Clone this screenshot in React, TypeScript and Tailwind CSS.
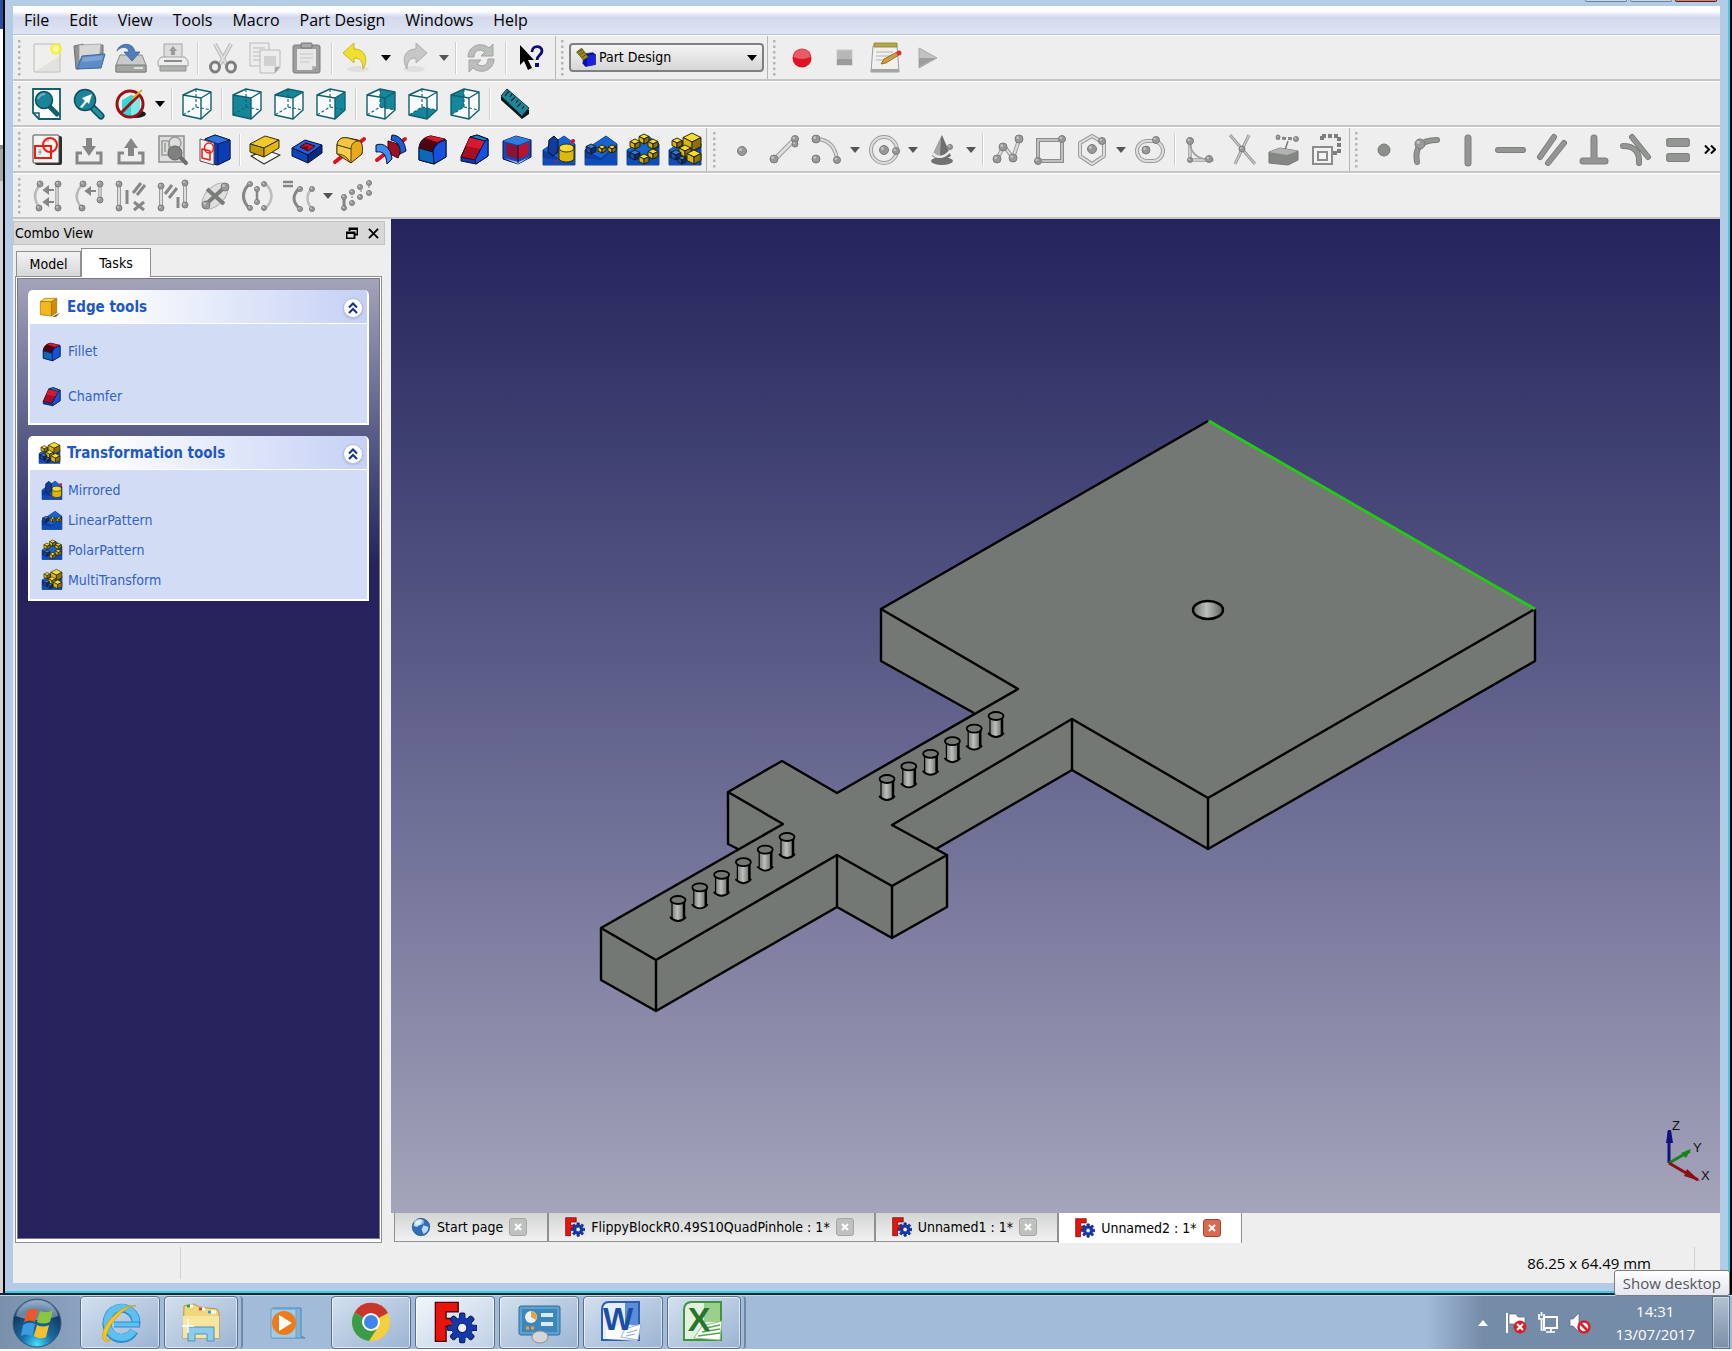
import { useState, type ReactNode } from 'react';
import clsx from 'clsx';

/* ---------- small drawing helpers ---------- */

const INK = '#858785';

function Dot({ x, y, r = 3 }: { x: number; y: number; r?: number }) {
  return (
    <g>
      <circle cx={x} cy={y} r={r} fill="#979997" stroke="#7b7d7b" strokeWidth="1" />
      <circle cx={x - r / 3} cy={y - r / 3} r={r / 3} fill="#c4c6c4" />
    </g>
  );
}

// double outlined line used by most of the sketcher icons
function Rail({ d, w = 4 }: { d: string; w?: number }) {
  return (
    <g fill="none" strokeLinecap="round" strokeLinejoin="round">
      <path d={d} stroke="#9b9d9b" strokeWidth={w} />
      <path d={d} stroke="#dcdddc" strokeWidth={w - 2} />
    </g>
  );
}

function Thick({ d, w = 5 }: { d: string; w?: number }) {
  return (
    <g fill="none" strokeLinecap="round" strokeLinejoin="round">
      <path d={d} stroke="#7c7f7c" strokeWidth={w} />
      <path d={d} stroke="#939693" strokeWidth={w - 2} />
    </g>
  );
}

function ViewCube({ face }: { face?: string }) {
  return (
    <g strokeLinejoin="round">
      <path d="M2 7 15 1 30 4 30 22 20 31 2 27Z" fill="#f7fbfb" />
      {face && <path d={face} fill="#16869a" />}
      <path d="M2 7 15 1 30 4 20 10ZM2 7V27L20 31V10M20 31 30 22V4" fill="none" stroke="#12606e" strokeWidth="1.4" />
      <path d="M15 1V19L2 27M15 19 30 22" fill="none" stroke="#12606e" strokeWidth="1.1" strokeDasharray="3 2" />
    </g>
  );
}

function Nub({ x, y, s = 4, c = 'gold' }: { x: number; y: number; s?: number; c?: 'gold' | 'blue' }) {
  const gold = c === 'gold';
  return (
    <g stroke="#1b1703" strokeWidth=".9" strokeLinejoin="round">
      <path d={`M${x - s} ${y - s / 2}L${x} ${y - s}L${x + s} ${y - s / 2}L${x} ${y}Z`} fill={gold ? '#f7dc2a' : '#2f7be6'} />
      <path d={`M${x - s} ${y - s / 2}L${x} ${y}V${y + s}L${x - s} ${y + s / 2}Z`} fill={gold ? '#d9b60c' : '#104fbd'} />
      <path d={`M${x + s} ${y - s / 2}L${x} ${y}V${y + s}L${x + s} ${y + s / 2}Z`} fill={gold ? '#8a7203' : '#082a80'} />
    </g>
  );
}

function BlueBase() {
  return (
    <g>
      <path d="M0 31V16L21 2 32 10V31Z" fill="#0a3d9e" stroke="#051c55" strokeWidth=".8" />
      <path d="M0 16 21 2 32 10 16 24Z" fill="#1763cf" />
      <path d="M0 24 16 26 32 14V31H0Z" fill="#0d4cba" />
    </g>
  );
}

/* ---------- toolbar icons, all on a 32 x 32 grid ---------- */

const icons: Record<string, ReactNode> = {
  new: (
    <g>
      <rect x="3" y="2" width="26" height="28" rx="1" fill="#efefee" stroke="#b9bab9" />
      <path d="M5 29h23V14Z" fill="#e2e2e1" />
      <circle cx="25" cy="7" r="6" fill="#f4f032" opacity=".8" />
      <circle cx="25" cy="7" r="3" fill="#fbfa9a" />
    </g>
  ),
  open: (
    <g>
      <path d="M1 4 10 2 12 4 30 3V16L5 27H3Z" fill="#8f918f" stroke="#6f716f" />
      <path d="M6 3 28 2 26 18H6Z" fill="#d6d7d6" stroke="#9fa19f" strokeWidth=".8" />
      <path d="M9 14 32 12 28 26 4 27Z" fill="#5f8cc6" stroke="#3d689f" />
      <path d="M10 15.500 30 13.500 29 18 9 20Z" fill="#7ba5d8" />
    </g>
  ),
  save: (
    <g>
      <path d="M5 13H27L31 23V30H1V23Z" fill="#c9cac9" stroke="#8a8c8a" />
      <path d="M1 23H31V30H1Z" fill="#a4a6a4" stroke="#7d7f7d" />
      <path d="M19 26h9" stroke="#ddd" strokeWidth="2" />
      <path d="M2 9C4 1 18-1 20 10H25L17 19 9 10H14C13 4 6 4 2 9Z" fill="#4e7db8" stroke="#37639a" strokeWidth=".8" />
    </g>
  ),
  print: (
    <g>
      <rect x="7" y="2" width="18" height="14" fill="#dcdddc" stroke="#a2a4a2" />
      <path d="M16 4 20 9H18V13H14V9H12Z" fill="#9a9c9a" />
      <path d="M4 15H28L31 19V24H1V19Z" fill="#ececec" stroke="#a2a4a2" />
      <path d="M7 19H25" stroke="#8a8c8a" strokeWidth="2" />
      <path d="M3 24H29V29H3Z" fill="#b2b4b2" stroke="#8f918f" />
    </g>
  ),
  cut: (
    <g fill="none">
      <path d="M8 2 19 22M24 2 13 22" stroke="#b7b9b7" strokeWidth="4" />
      <path d="M8 2 19 22M24 2 13 22" stroke="#dedfde" strokeWidth="2" />
      <ellipse cx="8" cy="25" rx="4.500" ry="5" stroke="#7d7f7d" strokeWidth="3" />
      <ellipse cx="24" cy="25" rx="4.500" ry="5" stroke="#7d7f7d" strokeWidth="3" />
    </g>
  ),
  copy: (
    <g fill="#ececec" stroke="#b8bab8">
      <rect x="1" y="1" width="19" height="23" />
      <path d="M4 6h12M4 10h12M4 14h8M4 18h8" fill="none" />
      <path d="M11 8H31V25L26 31H11Z" />
      <path d="M15 14H27V24H15Z" fill="#cfd0cf" stroke="none" />
      <path d="M31 25H26V31Z" fill="#9fa19f" />
    </g>
  ),
  paste: (
    <g>
      <rect x="2" y="3" width="27" height="28" rx="2" fill="#9c9e9c" stroke="#7b7d7b" />
      <path d="M6 7H25V24L21 28H6Z" fill="#e6e7e6" />
      <path d="M9 12h13M9 16h13M9 20h9" stroke="#c4c5c4" />
      <path d="M25 24H21V28Z" fill="#b4b6b4" />
      <rect x="10" y="1" width="11" height="5" rx="1" fill="#a9aba9" stroke="#707270" />
    </g>
  ),
  undo: (
    <g>
      <ellipse cx="17" cy="27" rx="11" ry="3" fill="#dfdfdd" />
      <path d="M2 11 13 1V7C24 7 28 17 22 27 22 19 19 16 13 16V21Z" fill="#f0df2e" stroke="#c9b71a" />
    </g>
  ),
  redo: (
    <g>
      <ellipse cx="15" cy="27" rx="11" ry="3" fill="#dfdfdd" />
      <path d="M28 11 17 1V7C6 7 2 17 8 27 8 19 11 16 17 16V21Z" fill="#c6c7c6" stroke="#aaacaa" />
    </g>
  ),
  refresh: (
    <g fill="#bcbebc" stroke="#a1a3a1">
      <path d="M3 15C3 4 16-1 24 6L28 2V14H16L20 10C14 6 9 9 9 15Z" />
      <path d="M29 17C29 28 16 33 8 26L4 30V18H16L12 22C18 26 23 23 23 17Z" />
    </g>
  ),
  whatsThis: (
    <g>
      <path d="M5 3V23L9 19 13 28 17 26 13 18H19Z" fill="#000" />
      <path d="M17 10C17 3 27 3 27 9 27 13 22 13 22 18" fill="none" stroke="#0a0a7c" strokeWidth="2.800" />
      <rect x="20" y="21" width="4" height="4" fill="#0a0a7c" />
    </g>
  ),
  record: (
    <g>
      <circle cx="16" cy="16" r="9.500" fill="#de1426" />
      <path d="M7.500 15A8.500 8 0 0 1 24.500 15Q16 19 7.500 15Z" fill="#ea5a66" />
    </g>
  ),
  stop: (
    <g>
      <rect x="9" y="8" width="15" height="15" fill="#b6b7b6" stroke="#c9cac9" />
      <rect x="9" y="17" width="15" height="6" fill="#9a9c9a" />
    </g>
  ),
  editMacro: (
    <g>
      <path d="M3 4H27L29 30H1Z" fill="#f0f0ee" stroke="#9c9e9c" />
      <path d="M1 27H29V30H1Z" fill="#a4a6a4" />
      <path d="M4 1H27V5H4Z" fill="#b4a84a" stroke="#8c8230" strokeWidth=".8" />
      <path d="M6 10h17M6 14h17M6 18h8" stroke="#b2b4b2" />
      <path d="M11 22 14 17 27 10 29 13 16 21Z" fill="#d69a3c" stroke="#8a5d18" strokeWidth=".8" />
      <circle cx="29" cy="11" r="2.500" fill="#d2323a" />
    </g>
  ),
  play: (
    <g>
      <path d="M7 6 25 16 7 26Z" fill="#c2c3c2" stroke="#a8aaa8" />
      <path d="M7 16H24L7 25Z" fill="#9c9e9c" />
    </g>
  ),

  fitAll: (
    <g>
      <path d="M2 1H29V31H8L2 25Z" fill="#fbfdfd" stroke="#12606e" strokeWidth="1.800" />
      <path d="M2 25H8V31" fill="none" stroke="#12606e" strokeWidth="1.500" />
      <path d="M19 19 26 26" stroke="#12606e" strokeWidth="5" strokeLinecap="round" />
      <circle cx="13" cy="12" r="8.500" fill="#1b8397" stroke="#0d4f5c" strokeWidth="1.500" />
      <path d="M7 11Q9 6 14 6" stroke="#6db6c3" strokeWidth="2" fill="none" />
    </g>
  ),
  fitSelection: (
    <g>
      <path d="M20 20 28 28" stroke="#0d4f5c" strokeWidth="7" strokeLinecap="round" />
      <path d="M21 21 28 28" stroke="#2290a5" strokeWidth="4" strokeLinecap="round" />
      <circle cx="12" cy="12" r="10.500" fill="#1b8397" stroke="#0d4f5c" strokeWidth="1.500" />
      <path d="M7 19 12 13 9 10 19 6 16 16 14 14 9 20Z" fill="#fff" />
    </g>
  ),
  drawStyle: (
    <g>
      <ellipse cx="20" cy="26" rx="11" ry="4" fill="#1b1b1b" />
      <path d="M7 12 16 7 25 10V25L16 29 7 26Z" fill="#35d6d6" />
      <path d="M16 13V29L25 25V10Z" fill="#7deaea" />
      <circle cx="15" cy="16" r="13" fill="none" stroke="#9c1016" strokeWidth="3" />
      <path d="M6 25 24 7" stroke="#9c1016" strokeWidth="3" />
      <path d="M17 11 27 2" stroke="#d6b12a" strokeWidth="2" />
    </g>
  ),
  axo: <ViewCube />,
  front: <ViewCube face="M2 7 20 10V31L2 27Z" />,
  top: <ViewCube face="M2 7 15 1 30 4 20 10Z" />,
  right: <ViewCube face="M30 4 20 10V31L30 22Z" />,
  rear: <ViewCube face="M15 1 30 4V22L15 19Z" />,
  bottom: <ViewCube face="M2 27 15 19 30 22 20 31Z" />,
  left: <ViewCube face="M2 7 15 1V19L2 27Z" />,
  measure: (
    <g>
      <path d="M2 8 8 1 30 22V26L23 31 2 12Z" fill="#111" />
      <path d="M2 8 8 1 30 20 23 28Z" fill="#1f8699" stroke="#0b3a44" />
      <path d="M10 3 6 8M13 6 11 9M16 9 12 13M19 12 17 15M22 15 18 19M25 18 23 21" stroke="#0b2a32" strokeWidth="1.300" />
    </g>
  ),

  sketch: (
    <g>
      <rect x="4" y="2" width="27" height="29" rx="2" fill="#2e2e2c" />
      <rect x="2" y="1" width="26" height="28" rx="1" fill="#f4f4f2" stroke="#4c4c4a" />
      <circle cx="19" cy="11" r="7" fill="none" stroke="#f21b10" strokeWidth="2" />
      <rect x="4" y="12" width="16" height="12" fill="none" stroke="#f21b10" strokeWidth="2" />
      <path d="M9 15v6M7 18h4M15 7h3" stroke="#8b8b89" />
    </g>
  ),
  importSketch: (
    <g>
      <path d="M9 19H4V29H28V19H23" fill="none" stroke={INK} strokeWidth="3" />
      <path d="M13 4H19V12H23L16 22 9 12H13Z" fill={INK} />
    </g>
  ),
  exportSketch: (
    <g>
      <path d="M9 19H4V29H28V19H23" fill="none" stroke={INK} strokeWidth="3" />
      <path d="M13 22H19V14H23L16 4 9 14H13Z" fill={INK} />
    </g>
  ),
  viewSketch: (
    <g>
      <rect x="2" y="2" width="25" height="26" fill="#dcdddc" stroke="#8d8f8d" strokeWidth="1.500" />
      <circle cx="18" cy="9" r="6" fill="none" stroke="#9b9d9b" strokeWidth="1.500" />
      <path d="M5 7h7v14H5ZM8 9v9" fill="none" stroke="#9b9d9b" strokeWidth="1.500" />
      <path d="M22 22 29 29" stroke="#6e706e" strokeWidth="4" strokeLinecap="round" />
      <circle cx="18" cy="19" r="7" fill="#7f817f" stroke="#636563" />
    </g>
  ),
  mapSketch: (
    <g strokeLinejoin="round">
      <path d="M6 5 16 1 31 6V25L18 31 6 27Z" fill="#0b3ab0" stroke="#03123c" />
      <path d="M6 5 16 1 31 6 19 10Z" fill="#2c74e0" stroke="#03123c" strokeWidth=".7" />
      <path d="M19 10 31 6V25L19 31Z" fill="#0c3cb4" stroke="#03123c" strokeWidth=".7" />
      <path d="M1 5 15 9V31L1 27Z" fill="#f1f1ef" stroke="#555" />
      <ellipse cx="10" cy="14" rx="4.500" ry="5" fill="none" stroke="#f21b10" strokeWidth="1.500" />
      <path d="M3 15 11 17V26L3 24Z" fill="none" stroke="#f21b10" strokeWidth="1.500" />
    </g>
  ),
  pad: (
    <g strokeLinejoin="round">
      <path d="M2 22 17 16 31 21 15 30Z" fill="#f6f6f4" stroke="#333" strokeWidth="1.200" />
      <path d="M1 10 16 2 30 6 15 14Z" fill="#f0c92c" stroke="#3a2f02" />
      <path d="M1 10 15 14V23L1 18Z" fill="#c39a0e" stroke="#3a2f02" />
      <path d="M15 14 30 6V14L15 23Z" fill="#e0b51a" stroke="#3a2f02" />
    </g>
  ),
  pocket: (
    <g strokeLinejoin="round">
      <path d="M1 14 14 6 31 11 17 21Z" fill="#1f63dc" stroke="#03123c" />
      <path d="M1 14 17 21V29L1 22Z" fill="#0e46b5" stroke="#03123c" />
      <path d="M17 21 31 11V19L17 29Z" fill="#0a2b80" stroke="#03123c" />
      <path d="M9 13 15 9 24 12 17 17Z" fill="#c2132b" stroke="#3b0208" />
      <path d="M9 13 17 12V17Z" fill="#6e0a18" />
    </g>
  ),
  revolve: (
    <g strokeLinejoin="round">
      <path d="M2 28 31 5" stroke="#e01020" strokeWidth="4" strokeLinecap="round" />
      <path d="M4 11C5 4 10 3 15 4L25 6C30 8 30 14 29 20L18 29 4 20Z" fill="#eaa91a" stroke="#3a2702" />
      <path d="M4 11C5 4 10 3 15 4L26 7C21 7 18 10 18 15Z" fill="#f6c63e" stroke="#3a2702" strokeWidth=".8" />
      <path d="M4 11 18 15V29L14 24C11 21 8 20 4 20Z" fill="#f9cf4e" stroke="#3a2702" strokeWidth=".8" />
    </g>
  ),
  groove: (
    <g strokeLinejoin="round">
      <path d="M2 26 30 5" stroke="#e01020" strokeWidth="4" strokeLinecap="round" />
      <path d="M13 7 20 9 27 14 23 24 13 19Z" fill="#9c0f22" stroke="#3b0208" />
      <path d="M17 1C24 1 30 7 31 17L25 20C26 12 22 7 16 6Z" fill="#1a5fd6" stroke="#03123c" />
      <path d="M1 11C9 8 16 14 17 25L12 30C11 20 8 17 1 18Z" fill="#3f8cf0" stroke="#03123c" />
    </g>
  ),
  fillet: (
    <g strokeLinejoin="round">
      <path d="M2 14C3 6 8 3 14 2L29 6V23L17 30 2 26Z" fill="#0b3ab0" stroke="#03123c" />
      <path d="M2 14C3 6 8 3 14 2L28 5C20 7 17 12 16 18Z" fill="#bb1029" stroke="#3b0208" />
      <path d="M2 14C3 9 5 6 8 4L21 8C18 11 17 14 16 18Z" fill="#4a0610" />
      <path d="M8 4 14 2 28 5C24 6 22 7 21 8Z" fill="#d8192f" />
      <path d="M29 6C20 8 17 13 16 18L17 30 29 23Z" fill="#1550e0" stroke="#03123c" />
      <path d="M2 14 16 18 17 30 2 26Z" fill="#0f67b8" stroke="#03123c" />
    </g>
  ),
  chamfer: (
    <g strokeLinejoin="round">
      <path d="M2 23 11 3 18 1 29 5V22L17 30 2 27Z" fill="#0b3ab0" stroke="#03123c" />
      <path d="M2 23 11 3 26 7 16 26Z" fill="#a50e24" stroke="#3b0208" />
      <path d="M11 3 26 7 22 15 7 12Z" fill="#d8192f" />
      <path d="M11 3 18 1 29 5 26 7Z" fill="#1a7fd0" stroke="#03123c" />
      <path d="M16 26 26 7 29 5V22L17 30Z" fill="#1550e0" stroke="#03123c" />
    </g>
  ),
  draft: (
    <g strokeLinejoin="round">
      <path d="M2 7 15 2 30 6V23L17 30 2 25Z" fill="#1546bb" stroke="#03123c" />
      <path d="M2 7 15 2 30 6 17 11Z" fill="#2f7be0" />
      <path d="M5 9 17 12V25L6 22Z" fill="#8b1232" />
      <path d="M17 12 28 8 27 21 17 25Z" fill="#b8142e" />
      <path d="M3 24 17 28 29 23 17 30Z" fill="#9cc0f2" />
      <path d="M17 11V29" stroke="#03123c" />
    </g>
  ),
  mirrored: (
    <g>
      <BlueBase />
      <path d="M6 6 11 2 15 6V18L10 22 5 18Z" fill="#103c9c" stroke="#02102f" />
      <path d="M10 31 31 5" stroke="#e01020" strokeWidth="1" />
      <circle cx="30" cy="7" r="2" fill="#e01020" />
      <path d="M16 14V25C18 29 29 29 31 25V14Z" fill="#dbb80e" stroke="#302701" />
      <ellipse cx="23.500" cy="14" rx="7.500" ry="4" fill="#f6dd35" stroke="#302701" />
    </g>
  ),
  linear: (
    <g>
      <BlueBase />
      <Nub x={6} y={15} s={5} c="blue" />
      <Nub x={17} y={15} />
      <Nub x={27} y={15} />
    </g>
  ),
  polar: (
    <g>
      <BlueBase />
      <Nub x={17} y={5} s={5} />
      <Nub x={8} y={10} s={5} />
      <Nub x={26} y={10} s={5} />
      <Nub x={8} y={21} s={5} c="blue" />
      <Nub x={26} y={20} s={5} />
      <Nub x={17} y={25} s={5} />
    </g>
  ),
  multi: (
    <g>
      <BlueBase />
      <Nub x={23} y={8} s={9} />
      <Nub x={8} y={9} s={5} />
      <Nub x={16} y={17} s={6} />
      <Nub x={7} y={21} s={5} c="blue" />
      <Nub x={25} y={23} s={7} />
      <Nub x={13} y={26} c="blue" />
    </g>
  ),

  point: <Dot x={16} y={17} r={4.5} />,
  line: (
    <g>
      <Rail d="M6 26 26 6" w={5} />
      <Dot x={6} y={25} r={4} />
      <Dot x={27} y={5} r={3.5} />
      <Dot x={27} y={10} r={3} />
    </g>
  ),
  arc: (
    <g>
      <Rail d="M7 5Q24 6 27 25" w={4} />
      <Dot x={6} y={5} r={4} />
      <Dot x={6} y={25} r={4} />
      <Dot x={27} y={26} r={3.5} />
    </g>
  ),
  circle: (
    <g>
      <circle cx="16" cy="16" r="13" fill="none" stroke="#9b9d9b" strokeWidth="4" />
      <circle cx="16" cy="16" r="13" fill="none" stroke="#dcdddc" strokeWidth="2" />
      <Dot x={16} y={16} r={4.5} />
      <Dot x={28} y={17} r={3.5} />
    </g>
  ),
  cone: (
    <g>
      <ellipse cx="16" cy="27" rx="11" ry="4" fill="#6f726f" />
      <path d="M16 1 25 22Q16 29 6 22Z" fill="#6d706d" />
      <path d="M15 3 14 22 7 20Z" fill="#a4a7a4" />
      <path d="M6 19Q15 28 25 16" fill="none" stroke="#e8e9e8" strokeWidth="2.500" />
      <Dot x={24} y={13} r={2.5} />
    </g>
  ),
  polyline: (
    <g>
      <Rail d="M5 25 12 12 21 24 27 6" w={4} />
      <Dot x={5} y={25} r={4} />
      <Dot x={11} y={13} r={4} />
      <Dot x={21} y={24} r={4} />
      <Dot x={27} y={5} r={4} />
    </g>
  ),
  rectangle: (
    <g>
      <path d="M4 6H28V27H4Z" fill="none" stroke="#8b8d8b" strokeWidth="4" />
      <path d="M4 6H28V27H4Z" fill="none" stroke="#cfd0cf" strokeWidth="1.500" />
      <Dot x={28} y={5} r={3.5} />
      <Dot x={4} y={27} r={3.5} />
    </g>
  ),
  hexagon: (
    <g>
      <Rail d="M16 2 28 9V22L16 30 4 22V9Z" w={4} />
      <Dot x={16} y={15} r={4.5} />
      <Dot x={26} y={7} r={3.5} />
    </g>
  ),
  slot: (
    <g>
      <rect x="3" y="7" width="26" height="20" rx="10" fill="none" stroke="#9b9d9b" strokeWidth="4" />
      <rect x="3" y="7" width="26" height="20" rx="10" fill="none" stroke="#dcdddc" strokeWidth="2" />
      <Dot x={12} y={16} r={4} />
      <Dot x={22} y={6} r={3.5} />
    </g>
  ),
  sketchFillet: (
    <g>
      <Rail d="M6 5V26H28" w={3.5} />
      <path d="M6 11Q9 24 22 25" fill="none" stroke="#9b9d9b" strokeWidth="1.500" />
      <Dot x={6} y={7} r={3.5} />
      <Dot x={6} y={26} r={2.5} />
      <Dot x={25} y={25} r={3.5} />
    </g>
  ),
  trim: (
    <g>
      <path d="M4 1 29 30M23 1 9 30" stroke="#9b9d9b" strokeWidth="3" />
      <path d="M4 1 29 30M23 1 9 30" stroke="#d3d4d3" strokeWidth="1" />
      <Dot x={16} y={15} r={3} />
    </g>
  ),
  external: (
    <g>
      <path d="M8 4 28 5" stroke={INK} strokeWidth="3" strokeDasharray="4 2" />
      <Dot x={10} y={3} r={2} />
      <Dot x={28} y={5} r={2.5} />
      <path d="M20 7 17 16" stroke="#757775" strokeWidth="1.500" />
      <path d="M1 18 12 14 30 17V26L20 31 1 29Z" fill="#858785" stroke="#747674" />
      <path d="M1 18 12 14 30 17 19 21Z" fill="#b2b4b2" />
    </g>
  ),
  carbonCopy: (
    <g fill="none">
      <path d="M12 2H29V19H23M12 2V8" stroke="#7d7f7d" strokeWidth="4" strokeDasharray="4 2" />
      <rect x="3" y="13" width="19" height="17" stroke="#8b8d8b" strokeWidth="2" fill="#f2f2f2" />
      <rect x="8" y="18" width="9" height="8" stroke="#8b8d8b" strokeWidth="2" />
    </g>
  ),

  coincident: <circle cx="16" cy="16" r="6" fill="#8b8e8b" stroke="#767976" />,
  pointOn: (
    <g>
      <Thick d="M7 28Q3 6 27 6" w={6} />
      <Dot x={10} y={10} r={5} />
    </g>
  ),
  vertical: <Thick d="M16 4V29" w={7} />,
  horizontal: <Thick d="M4 16H29" w={6} />,
  parallel: <Thick d="M4 23 18 3M12 29 28 9" w={6} />,
  perpendicular: <Thick d="M16 4V26M5 27H27" w={7} />,
  tangent: <Thick d="M3 12Q20 12 19 29M12 3 28 23" w={6} />,
  equal: <Thick d="M7 7H25M7 10H25M7 22H25M7 25H25" w={6} />,

  close: (
    <g>
      <path d="M10 4Q-2 16 10 29" fill="none" stroke="#b8bab8" strokeWidth="2.500" />
      <Rail d="M26 4V29" w={3.5} />
      <path d="M13 10H23M13 22H23M13 10l4-3v6ZM13 22l4-3v6Z" fill={INK} stroke={INK} strokeWidth="2" />
      <Dot x={9} y={4} />
      <Dot x={27} y={4} />
      <Dot x={8} y={28} />
      <Dot x={27} y={28} />
    </g>
  ),
  connect: (
    <g>
      <path d="M10 4Q-2 16 9 28" fill="none" stroke="#b8bab8" strokeWidth="2.500" />
      <Rail d="M27 4V20" w={3.5} />
      <path d="M13 11H23M13 11l4-3v6Z" fill={INK} stroke={INK} strokeWidth="2" />
      <Dot x={10} y={4} />
      <Dot x={27} y={4} />
      <Dot x={9} y={28} />
      <Dot x={27} y={20} />
    </g>
  ),
  selectConstraints: (
    <g>
      <Rail d="M4 4V28" w={4} />
      <Dot x={4} y={4} />
      <Dot x={4} y={28} />
      <path d="M12 10V24M18 13 26 3M22 15 30 5M19 22 29 30M29 22 19 30" stroke={INK} strokeWidth="3" />
    </g>
  ),
  selectOrigin: (
    <g>
      <Rail d="M4 5V28M28 3V25" w={4} />
      <path d="M8 14 15 5M12 18 20 8M21 17V28" stroke={INK} strokeWidth="3" />
      <Dot x={4} y={6} />
      <Dot x={4} y={28} />
      <Dot x={28} y={3} />
      <Dot x={28} y={25} />
    </g>
  ),
  conflict: (
    <g>
      <ellipse cx="16" cy="16" rx="16" ry="9" transform="rotate(-45 16 16)" fill="#dedfde" stroke="#b2b4b2" />
      <path d="M5 26 27 6M8 9 25 24" stroke="#7a7c7a" strokeWidth="4" />
      <Dot x={26} y={7} r={4} />
      <Dot x={7} y={25} r={4} />
    </g>
  ),
  internal: (
    <g fill="none">
      <path d="M9 3Q-4 16 9 29" stroke={INK} strokeWidth="3" />
      <path d="M24 3Q37 16 24 29" stroke="#bcbebc" strokeWidth="2.500" />
      <path d="M16 9V22" stroke={INK} strokeWidth="2.500" />
      <Dot x={9} y={4} r={2.5} />
      <Dot x={23} y={4} r={2.5} />
      <Dot x={16} y={9} r={2.5} />
      <Dot x={16} y={22} r={2.5} />
      <Dot x={9} y={28} r={2.5} />
      <Dot x={23} y={28} r={2.5} />
    </g>
  ),
  symmetry: (
    <g fill="none">
      <path d="M0 2H10M0 6H10" stroke={INK} strokeWidth="2.500" />
      <path d="M17 8Q5 18 17 29" stroke={INK} strokeWidth="3" />
      <path d="M29 8Q20 18 29 29" stroke="#bcbebc" strokeWidth="2.500" />
      <Dot x={17} y={9} r={2.5} />
      <Dot x={17} y={29} r={2.5} />
      <Dot x={29} y={9} r={2.5} />
      <Dot x={29} y={29} r={2.5} />
    </g>
  ),
  clone: (
    <g>
      <path d="M11 12V23M20 6V17M28 2V13" stroke="#b4b6b4" strokeWidth="2" strokeDasharray="2 2" />
      <path d="M3 17V28" stroke={INK} strokeWidth="3" />
      <Dot x={3} y={17} r={2.5} />
      <Dot x={3} y={28} r={2.5} />
      <Dot x={11} y={12} r={2.5} />
      <Dot x={11} y={23} r={2.5} />
      <Dot x={19} y={7} r={2.5} />
      <Dot x={19} y={17} r={2.5} />
      <Dot x={28} y={3} r={2.5} />
      <Dot x={28} y={13} r={2.5} />
    </g>
  ),

  workbench: (
    <g>
      <path d="M13 11 27 9 31 12V28L15 31 11 26Z" fill="#0510b0" stroke="#02053c" />
      <path d="M18 14 31 12V28L18 31Z" fill="#1a22e0" />
      <path d="M1 8 9 2 20 16 12 21Z" fill="#9a8a14" stroke="#332d02" />
      <path d="M4 8 10 4M7 12 13 8M10 16 16 12" stroke="#332d02" />
    </g>
  ),
  edgeTools: (
    <g>
      <path d="M20 30 32 24 26 30Z" fill="#5c4a10" />
      <path d="M2 7 9 2 27 2 19 7Z" fill="#fbd650" stroke="#9b6d05" />
      <path d="M2 7H19V29L2 27Z" fill="#f5b81c" stroke="#9b6d05" />
      <path d="M19 7 27 2V24L19 29Z" fill="#cf8c09" stroke="#9b6d05" />
    </g>
  ),
  globe: (
    <g>
      <circle cx="16" cy="16" r="14" fill="#2e6fb8" stroke="#1c4577" />
      <path d="M6 8Q12 2 18 5L15 12 9 16 4 14ZM20 13 28 16Q27 25 20 27L17 20Z" fill="#b9dcf5" />
      <ellipse cx="13" cy="8" rx="8" ry="5" fill="#fff" opacity=".5" />
    </g>
  ),
};

function Icon({ name, className = 'size-8' }: { name: string; className?: string }) {
  return (
    <svg viewBox="0 0 32 32" className={clsx('shrink-0 overflow-visible', className)} aria-hidden="true">
      {icons[name]}
    </svg>
  );
}

// FreeCAD mark: red F with a blue gear in front
function FreeCad({ className }: { className: string }) {
  return (
    <svg viewBox="0 0 32 32" className={clsx('shrink-0', className)} aria-hidden="true">
      <path d="M1 1H18V8H9V13H15V19H9V30H1Z" fill="#e8140c" stroke="#4d0503" />
      {[0, 45, 90, 135].map((a) => (
        <rect key={a} x="19" y="9" width="4" height="22" rx="1" transform={`rotate(${a} 21 20)`} fill="#1438a8" stroke="#0a1f63" strokeWidth=".8" />
      ))}
      <circle cx="21" cy="20" r="8" fill="#1438a8" />
      <circle cx="21" cy="20" r="3.500" fill="#eef2fa" stroke="#0a1f63" strokeWidth=".8" />
    </svg>
  );
}

/* ---------- toolbars ---------- */

type Item = string | '|' | { arrow: string; dim?: boolean };

const fileBar: Item[] = [
  'new', 'open', 'save', 'print', '|', 'cut', 'copy', 'paste', '|',
  'undo', { arrow: 'Undo list' }, 'redo', { arrow: 'Redo list', dim: true }, '|', 'refresh', '|', 'whatsThis',
];
const macroBar: Item[] = ['record', 'stop', 'editMacro', 'play'];
const viewBar: Item[] = [
  'fitAll', 'fitSelection', 'drawStyle', { arrow: 'Draw style list' }, '|', 'axo', '|',
  'front', 'top', 'right', '|', 'rear', 'bottom', 'left', '|', 'measure',
];
const designBar: Item[] = [
  'sketch', 'importSketch', 'exportSketch', 'viewSketch', 'mapSketch', '|',
  'pad', 'pocket', 'revolve', 'groove', 'fillet', 'chamfer', 'draft', 'mirrored', 'linear', 'polar', 'multi',
];
const geometryBar: Item[] = [
  'point', 'line', 'arc', { arrow: 'Arc list', dim: true }, 'circle', { arrow: 'Circle list', dim: true },
  'cone', { arrow: 'Conic list', dim: true }, '|', 'polyline', 'rectangle', 'hexagon',
  { arrow: 'Polygon list', dim: true }, 'slot', '|', 'sketchFillet', 'trim', 'external', 'carbonCopy',
];
const constraintBar: Item[] = [
  'coincident', 'pointOn', 'vertical', 'horizontal', 'parallel', 'perpendicular', 'tangent', 'equal',
];
const sketcherBar: Item[] = [
  'close', 'connect', 'selectConstraints', 'selectOrigin', 'conflict', 'internal', 'symmetry',
  { arrow: 'Symmetry list', dim: true }, 'clone',
];

function Grip() {
  return (
    <svg viewBox="0 0 3 38" className="mx-[5px] h-[38px] w-[3px] shrink-0" aria-hidden="true">
      {[0, 1, 2, 3, 4, 5, 6].map((i) => (
        <rect key={i} x="0" y={1 + i * 5.5} width="2.500" height="2.500" fill="#b4b5b4" />
      ))}
    </svg>
  );
}

function ToolBar({ items, last, className, children }: { items?: Item[]; last?: boolean; className?: string; children?: ReactNode }) {
  return (
    <div
      role="toolbar"
      className={clsx('flex h-full items-center', last ? 'min-w-0 flex-1' : 'border-r border-[#b5b6b5]', className)}
    >
      <Grip />
      {items?.map((it, i) => {
        if (it === '|') return <span key={i} className="mx-[3px] h-8 w-[2px] border-l border-[#cdcecd] bg-white" />;
        if (typeof it === 'string') {
          return (
            <button key={i} type="button" aria-label={it} className="flex h-9 w-[42px] shrink-0 items-center justify-center">
              <Icon name={it} />
            </button>
          );
        }
        return (
          <button key={i} type="button" aria-label={it.arrow} className="flex h-9 w-4 shrink-0 items-center justify-center">
            <svg viewBox="0 0 10 6" className={clsx('h-[6px] w-[10px]', it.dim ? 'fill-[#555]' : 'fill-black')} aria-hidden="true">
              <path d="M0 0H10L5 6Z" />
            </svg>
          </button>
        );
      })}
      {children}
    </div>
  );
}

function BarRow({ children }: { children: ReactNode }) {
  return (
    <div className="flex h-[46px] items-center border-t border-b-2 border-t-white border-b-[#c4c5c5] bg-[#eeeeee]">{children}</div>
  );
}

/* ---------- combo view ---------- */

function TaskBox({ icon, title, tools, rowClass }: { icon: string; title: string; tools: [string, string][]; rowClass: string }) {
  return (
    <section className="overflow-hidden rounded-t-[5px] border-2 border-t-0 border-white bg-[#d3dcf5]">
      <header className="flex h-[34px] items-center border-b border-white bg-linear-to-r from-white from-20% to-[#c5d0f4] pt-[2px] pr-1 pl-[9px]">
        <Icon name={icon} className="size-[21px]" />
        <h2 className="ml-[7px] flex-1 text-[15px] font-bold text-[#2158c8]">{title}</h2>
        <button
          type="button"
          aria-label={`Collapse ${title}`}
          className="flex size-5 items-center justify-center rounded-full border border-[#b3bbd6] bg-white shadow-sm"
        >
          <svg viewBox="0 0 10 12" className="h-3 w-[10px] fill-none stroke-[#13348e] stroke-2" aria-hidden="true">
            <path d="M1 5.500 5 1.500 9 5.500M1 11 5 7 9 11" />
          </svg>
        </button>
      </header>
      <ul className="pt-[5px] pb-1 pl-[12px]">
        {tools.map(([name, label]) => (
          <li key={label} className={clsx('flex items-center', rowClass)}>
            <a href="#" className="flex items-center gap-[6px] text-[14px] text-[#2f62cc]">
              <Icon name={name} className="size-5" />
              {label}
            </a>
          </li>
        ))}
      </ul>
    </section>
  );
}

function ComboView() {
  const [tab, setTab] = useState('Tasks');
  return (
    <aside className="flex w-[378px] shrink-0 flex-col pt-[2px]">
      <div className="mr-[6px] flex h-6 items-center border border-[#c2c3c2] bg-[#d7d8d7] pl-px">
        <h1 className="flex-1 text-[14px]">Combo View</h1>
        <button type="button" aria-label="Float" className="flex w-[21px] justify-center">
          <svg viewBox="0 0 12 12" className="size-3 fill-none stroke-black" aria-hidden="true">
            <path d="M3.500 4V1.500H11.500V7.500H9M3.500 2H11.500" strokeWidth="1.800" />
            <path d="M.5 5.500H8.500V11.500H.5ZM.5 6.200H8.500" strokeWidth="1.800" />
          </svg>
        </button>
        <button type="button" aria-label="Close" className="flex w-[22px] justify-center">
          <svg viewBox="0 0 12 12" className="size-[11px] stroke-black stroke-2" aria-hidden="true">
            <path d="M1 1 11 11M11 1 1 11" />
          </svg>
        </button>
      </div>
      <div role="tablist" className="mt-[3px] flex h-7 items-end pl-[3px] text-[14px]">
        {['Model', 'Tasks'].map((t) => (
          <button
            key={t}
            type="button"
            role="tab"
            aria-selected={t === tab}
            onClick={() => setTab(t)}
            className={clsx(
              'border border-b-0 border-[#8e9094]',
              t === tab ? 'relative z-10 -mb-px h-[29px] w-[70px] bg-white' : 'h-[25px] w-[65px] bg-linear-to-b from-[#f3f3f3] to-[#d6d7d7]',
            )}
          >
            {t}
          </button>
        ))}
      </div>
      <div className="mr-[9px] ml-[2px] flex flex-1 flex-col border border-[#8e9094] bg-white p-px pb-[3px]">
        <div className="flex flex-1 flex-col gap-[11px] border border-[#77788a] bg-linear-to-b from-[#a3a3ba] to-[#25225c] to-30% px-[10px] pt-[11px]">
          <TaskBox icon="edgeTools" title="Edge tools" rowClass="h-[45px]" tools={[['fillet', 'Fillet'], ['chamfer', 'Chamfer']]} />
          <TaskBox
            icon="multi"
            title="Transformation tools"
            rowClass="h-[30px]"
            tools={[['mirrored', 'Mirrored'], ['linear', 'LinearPattern'], ['polar', 'PolarPattern'], ['multi', 'MultiTransform']]}
          />
        </div>
      </div>
    </aside>
  );
}

/* ---------- 3D view ---------- */

function Pin({ x, y }: { x: number; y: number }) {
  return (
    <g stroke="#000" strokeWidth="1.800">
      <path d={`M${x - 7} ${y - 8}V${y + 9}Q${x} ${y + 14} ${x + 7} ${y + 9}V${y - 8}Z`} fill="url(#pin)" strokeWidth="0" />
      <path d={`M${x - 6} ${y - 7}V${y + 9}`} strokeWidth="1.200" />
      <path d={`M${x + 6} ${y - 7}V${y + 9}`} strokeWidth="2.500" />
      <path d={`M${x - 8} ${y + 8}Q${x} ${y + 16} ${x + 8} ${y + 8}`} fill="none" />
      <ellipse cx={x} cy={y - 9} rx="7.500" ry="4" fill="#747874" />
    </g>
  );
}

function Viewport() {
  const pins = [0, 1, 2, 3, 4, 5];
  return (
    <div className="min-h-0 flex-1 bg-linear-to-b from-[#25235b] via-[#62628d] via-50% to-[#a4a4ba]">
      <svg viewBox="391 219 1329 994" className="h-full w-full" role="img" aria-label="Model">
        <defs>
          <linearGradient id="pin">
            <stop offset="0" stopColor="#6d706d" />
            <stop offset=".45" stopColor="#bdbfbd" />
            <stop offset="1" stopColor="#5d605d" />
          </linearGradient>
        </defs>
        <path
          d="M1208 421 1535 609V661L1208 849 1072 770 936 849 947 855V907L892 938 837 907 656 1011 601 980V928L738 849 728 844V792L782 761 837 793 974 713 881 661V609Z"
          fill="#747874"
        />
        <g fill="none" stroke="#000" strokeWidth="2.400" strokeLinejoin="round">
          <path d="M1208 421 881 609 1018 689 837 793 782 761 728 792 783 824 601 928 656 960 837 855 892 886 947 855 892 825 1072 719 1208 798 1535 609" />
          <path d="M881 609V661L974 713M728 792V844L738 849M601 928V980L656 1011 837 907 892 938 947 907V855M936 849 1072 770 1208 849 1535 661V609" />
          <path d="M656 960V1011M837 855V907M892 886V938M1072 719V770M1208 798V849" />
        </g>
        <path d="M1209 421 1535 609" stroke="#22cc12" strokeWidth="2.800" />
        <ellipse cx="1208" cy="610" rx="15" ry="9" fill="url(#pin)" stroke="#000" strokeWidth="2.400" />
        {pins.map((i) => (
          <Pin key={i} x={678 + i * 21.8} y={909 - i * 12.6} />
        ))}
        {pins.map((i) => (
          <Pin key={i} x={887 + i * 21.8} y={788 - i * 12.6} />
        ))}
        <g strokeWidth="3">
          <path d="M1669 1163V1131" stroke="#14107e" />
          <path d="M1666 1143 1668 1130H1671L1673 1143Z" fill="#14107e" />
          <path d="M1669 1163 1690 1151" stroke="#14851a" />
          <path d="M1681 1153 1691 1149 1686 1158Z" fill="#14851a" />
          <path d="M1669 1163 1698 1180" stroke="#8c0f14" />
          <path d="M1687 1169 1700 1181 1684 1176Z" fill="#8c0f14" />
        </g>
        <g className="fill-[#111] font-[family-name:'Liberation_Sans',sans-serif] text-[13px]">
          <text x="1672" y="1130">Z</text>
          <text x="1693" y="1152">Y</text>
          <text x="1701" y="1180">X</text>
        </g>
      </svg>
    </div>
  );
}

const docs = ['Start page', 'FlippyBlockR0.49S10QuadPinhole : 1*', 'Unnamed1 : 1*', 'Unnamed2 : 1*'];

function DocTabs() {
  const [active, setActive] = useState(3);
  return (
    <div role="tablist" className="flex h-[30px] items-start pl-[3px] text-[14px]">
      {docs.map((d, i) => (
        <div
          key={d}
          className={clsx(
            'flex items-center border border-t-0 border-[#8e9094] pr-5 pl-4',
            i === active ? 'h-[31px] bg-white' : 'h-[29px] bg-linear-to-b from-[#d3d5d4] to-[#f1f1f1]',
          )}
        >
          <button type="button" role="tab" aria-selected={i === active} onClick={() => setActive(i)} className="flex items-center gap-[6px]">
            {i === 0 ? <Icon name="globe" className="size-5" /> : <FreeCad className="size-5" />}
            {d}
          </button>
          <button
            type="button"
            aria-label={`Close ${d}`}
            className={clsx(
              'ml-[6px] flex size-[18px] items-center justify-center rounded-[3px] border',
              i === active ? 'border-[#a84232] bg-[#d9694f]' : 'border-[#a5a7a5] bg-[#bfc1bf]',
            )}
          >
            <svg viewBox="0 0 8 8" className="size-2 stroke-white stroke-2" aria-hidden="true">
              <path d="M1 1 7 7M7 1 1 7" />
            </svg>
          </button>
        </div>
      ))}
    </div>
  );
}

/* ---------- windows taskbar ---------- */

const apps: { name: string; stacked?: boolean; plain?: boolean; lit?: boolean; art: ReactNode }[] = [
  {
    name: 'Internet Explorer',
    art: (
      <g fill="none">
        <path d="M34 29A14.500 15 0 1 1 36 22" stroke="#2b8ccb" strokeWidth="9" />
        <path d="M33.500 29A14.500 15 0 1 1 36 21.500" stroke="#5cc0f0" strokeWidth="7" />
        <path d="M14 22.500H40" stroke="#2b8ccb" strokeWidth="6" />
        <path d="M14 22.500H39" stroke="#5cc0f0" strokeWidth="4" />
        <path d="M4 38C-4 30 20 0 36 4 28 2 8 20 6 36 6 39 9 38 11 37 9 40 6 41 4 38Z" fill="#f4c821" stroke="#c99a10" strokeWidth=".7" />
      </g>
    ),
  },
  {
    name: 'Explorer',
    stacked: true,
    art: (
      <g>
        <path d="M3 4 13 2 18 5 36 7 38 11V36H2Z" fill="#f0d67c" stroke="#b99537" />
        <path d="M6 4H12M18 7H24M27 10H35" stroke="#fff" strokeWidth="3" />
        <path d="M6 4H9" stroke="#27a33a" strokeWidth="3" />
        <path d="M18 7H21" stroke="#d1402e" strokeWidth="3" />
        <path d="M27 10H30" stroke="#3b9bdd" strokeWidth="3" />
        <path d="M2 14H38V36H2Z" fill="#f7e6a0" />
        <path d="M7 39V25H33V39H26V32H14V39Z" fill="#8fcbea" stroke="#4c93bd" />
        <path d="M7 17V31M1 24H13" stroke="#fff" strokeWidth="1.500" />
      </g>
    ),
  },
  {
    name: 'Media Player',
    plain: true,
    art: (
      <g>
        <path d="M6 6H34V34L38 36H6Z" fill="#7fb4d8" stroke="#5687ac" />
        <rect x="4" y="7" width="25" height="29" fill="#9ecbe8" stroke="#6ea2c6" />
        <circle cx="17" cy="21" r="12" fill="#ee7b1b" />
        <path d="M12 13 25 21 12 29Z" fill="#fff" />
      </g>
    ),
  },
  {
    name: 'Chrome',
    art: (
      <g>
        <circle cx="20" cy="20" r="19" fill="#f6cf3c" />
        <path d="M20 20 3.500 10.500A19 19 0 0 1 37 11Z" fill="#c9352b" />
        <path d="M20 20 3.500 10.500A19 19 0 0 0 18 39L27 25Z" fill="#3a9c48" />
        <circle cx="20" cy="20" r="9" fill="#fff" />
        <circle cx="20" cy="20" r="7" fill="#4285e8" />
      </g>
    ),
  },
  { name: 'FreeCAD', lit: true, art: null },
  {
    name: 'Control Panel',
    art: (
      <g>
        <rect x="0" y="4" width="41" height="29" rx="2" fill="#5ba0cf" stroke="#2f6c99" />
        <rect x="3" y="7" width="35" height="23" fill="#3c86bb" />
        <circle cx="12" cy="15" r="6" fill="#e6f1f8" />
        <path d="M12 15V9A6 6 0 0 1 17 18Z" fill="#f0a030" />
        <path d="M22 13H34M22 22H34" stroke="#d8ecf8" strokeWidth="4" />
        <path d="M7 26h3M12 26h3" stroke="#f0a030" strokeWidth="3" />
        <ellipse cx="21" cy="35" rx="8" ry="6" fill="#d4d6d8" stroke="#8d9195" />
      </g>
    ),
  },
  {
    name: 'Word',
    art: (
      <g>
        <path d="M-1 8Q-1 0 6 0H36V38H-1Z" fill="#e6eef9" stroke="#2b5fb4" strokeWidth="2" />
        <path d="M22 1H35V24H22Z" fill="#5c8ed8" />
        <path d="M3 28 20 22 37 24 34 39 3 37Z" fill="#fff" opacity=".8" />
        <path d="M22 27 38 22 35 38 18 35Z" fill="#fff" stroke="#9db4d8" />
        <path d="M24 31 34 28M23 34 32 32" stroke="#8aa3cf" />
        <text x="15" y="28" textAnchor="middle" className="fill-[#1b4da6] font-[family-name:'Liberation_Sans',sans-serif] text-[32px] font-bold">W</text>
      </g>
    ),
  },
  {
    name: 'Excel',
    stacked: true,
    art: (
      <g>
        <path d="M0 8Q0 0 8 0H37V38H0Z" fill="#e3f2df" stroke="#3f9440" strokeWidth="2" />
        <path d="M20 1H36V20H20Z" fill="#9bcf8c" />
        <path d="M18 24 38 19 36 38 10 36Z" fill="#fff" stroke="#8cbf85" />
        <path d="M22 26 36 23M18 30 36 27M14 34 36 31" stroke="#58a556" strokeWidth="1.500" />
        <text x="15" y="29" textAnchor="middle" className="fill-[#25772b] font-[family-name:'Liberation_Sans',sans-serif] text-[34px] font-bold">X</text>
      </g>
    ),
  },
];

function TaskBar() {
  return (
    <footer className="relative flex h-[54px] shrink-0 border-t border-[#c3d4e6] bg-[#a1bbd9]">
      <button type="button" aria-label="Start" className="flex w-20 items-center bg-linear-to-r from-[#7990aa] to-[#8ba3c0] pl-3">
        <svg viewBox="0 0 50 50" className="size-[50px]" aria-hidden="true">
          <defs>
            <radialGradient id="orb" cx=".5" cy=".95" r=".9">
              <stop offset="0" stopColor="#3fe3ff" />
              <stop offset=".35" stopColor="#1a6fa8" />
              <stop offset=".8" stopColor="#123a63" />
              <stop offset="1" stopColor="#6d8db0" />
            </radialGradient>
          </defs>
          <circle cx="25" cy="25" r="24" fill="url(#orb)" stroke="#3a5574" />
          <path d="M4 18A22 22 0 0 1 46 18Q25 26 4 18Z" fill="#b9cfe2" opacity=".5" />
          <path d="M15 13Q20 9 26 12L23 24Q18 21 12 24Z" fill="#e8582a" />
          <path d="M28 13Q34 16 41 12L38 24Q31 27 25 24Z" fill="#8cc63c" />
          <path d="M11 27Q17 23 23 26L20 38Q14 35 9 38Z" fill="#3c9be0" />
          <path d="M25 27Q31 30 37 27L34 39Q28 42 22 38Z" fill="#f6c02c" />
        </svg>
      </button>
      <nav className="flex flex-1 gap-1">
        {apps.map((a) => (
          <div key={a.name} className={clsx('flex', a.stacked && 'rounded-r-[4px] border-r-2 border-[#6f88a5] pr-[3px]')}>
            <button
              type="button"
              aria-label={a.name}
              className={clsx(
                'flex h-[53px] items-center justify-center',
                a.stacked ? 'w-[74px]' : 'w-20',
                a.plain
                  ? ''
                  : a.lit
                    ? 'rounded-[4px] border border-[#59708c] bg-linear-to-br from-[#f2f6fb] to-[#bfd0e5] ring-1 ring-white/70 ring-inset'
                    : 'rounded-[4px] border border-[#59708c] bg-linear-to-br from-[#d3e0ef] to-[#9cb4d2] ring-1 ring-white/60 ring-inset',
              )}
            >
              {a.art ? (
                <svg viewBox="0 0 41 41" className="size-[41px] overflow-visible" aria-hidden="true">{a.art}</svg>
              ) : (
                <FreeCad className="size-[43px]" />
              )}
            </button>
          </div>
        ))}
      </nav>
      <div className="flex items-center gap-[10px] bg-linear-to-r from-[#a1bbd9] to-[#758ca8] to-20% pr-[17px] pl-[52px] text-white">
        <button type="button" aria-label="Show hidden icons" className="mr-[7px]">
          <svg viewBox="0 0 10 6" className="h-[6px] w-[10px] fill-white" aria-hidden="true"><path d="M0 6 5 0 10 6Z" /></svg>
        </button>
        <svg viewBox="0 0 22 22" className="size-[22px]" aria-label="Action center">
          <path d="M2 1V21" stroke="#fff" strokeWidth="2" />
          <path d="M4 2H11L13 5H20V12H4Z" fill="#fff" stroke="#55677c" strokeWidth=".7" />
          <circle cx="15" cy="15" r="6.500" fill="#d8202a" />
          <path d="M12 12 18 18M18 12 12 18" stroke="#fff" strokeWidth="2" />
        </svg>
        <svg viewBox="0 0 22 22" className="size-[22px] fill-none stroke-white" aria-label="Network">
          <rect x="7" y="5" width="13" height="11" strokeWidth="2" />
          <path d="M9 20H18M14 16V20M2 2V7H7V2M4.500 0V4M4.500 8V18H9" strokeWidth="1.700" />
        </svg>
        <svg viewBox="0 0 22 22" className="size-[22px]" aria-label="Volume muted">
          <path d="M1 7H4L10 1V20L4 14H1Z" fill="#fff" stroke="#55677c" strokeWidth=".7" />
          <circle cx="15" cy="15" r="5.500" fill="#f4f4f4" stroke="#d8202a" strokeWidth="2.500" />
          <path d="M11 11 19 19" stroke="#d8202a" strokeWidth="2.500" />
        </svg>
        <time className="ml-[14px] text-center font-[family-name:'Open_Sans',sans-serif] text-[15px] leading-[23px]">
          14:31
          <br />
          13/07/2017
        </time>
      </div>
      <button
        type="button"
        aria-label="Show desktop"
        className="mr-[2px] w-[18px] border border-[#5a6f88] bg-linear-to-b from-[#b4c1d0] to-[#7b8fa8] ring-1 ring-white/40 ring-inset"
      />
      <div
        role="tooltip"
        className="absolute right-[2px] bottom-full z-20 rounded-[3px] border border-[#7c7d80] bg-linear-to-b from-white to-[#e4e6f1] px-2 font-[family-name:'Open_Sans',sans-serif] text-[15px] leading-6 text-[#575757]"
      >
        Show desktop
      </div>
    </footer>
  );
}

/* ---------- page ---------- */

const menus = ['File', 'Edit', 'View', 'Tools', 'Macro', 'Part Design', 'Windows', 'Help'];

export default function App() {
  return (
    <div className="flex h-screen flex-col overflow-hidden bg-white pb-[2px] font-[family-name:'DejaVu_Sans_Condensed',sans-serif] text-black">
      <div className="flex min-h-0 flex-1 border-b-2 border-[#16242c]">
        {/* sliver of the window behind */}
        <div className="flex w-[3px] flex-col bg-[#d2d3d4]">
          <div className="h-[29px] bg-[#2450a4]" />
          <div className="h-[116px] bg-white" />
          <div className="h-9 border-t-4 border-[#8a8a8a] bg-[#a9a9a9]" />
        </div>
        <div className="flex min-w-0 flex-1 flex-col border-x-2 border-black">
          <div className="flex min-h-0 flex-1 flex-col border-r-2 border-b-2 border-[#35d0e8] bg-[#b3cbe5] pr-2 pb-2 pl-2">
            <div className="flex h-[6px] items-start justify-end gap-[3px] pr-[3px]">
              <span className="h-[2px] w-[42px] rounded-b-[3px] border-x border-b border-[#6d8296] bg-[#c6d8ea]" />
              <span className="h-[2px] w-[42px] rounded-b-[3px] border-x border-b border-[#6d8296] bg-[#c6d8ea]" />
              <span className="h-[2px] w-[42px] rounded-b-[3px] border-x border-b border-[#5d1a1a] bg-[#c98478]" />
            </div>
            <nav className="flex h-[29px] items-center border-b border-[#b9c3d8] bg-linear-to-b from-[#fbfcfe] from-20% via-[#d3d9ec] via-40% to-[#dfe4f3] pb-px pl-px font-[family-name:'Open_Sans',sans-serif] text-[16px]">
              {menus.map((m) => (
                <button key={m} type="button" className="px-[10px]">{m}</button>
              ))}
            </nav>
            <BarRow>
              <ToolBar items={fileBar} className="pr-[3px]" />
              <ToolBar>
                <div className="relative mr-[3px] w-[195px]">
                  <select
                    aria-label="Workbench"
                    className="h-[29px] w-full appearance-none rounded-[4px] border-2 border-[#7f817f] bg-linear-to-b from-[#f4f4f4] to-[#d5d6d5] pl-[28px] text-[14px]"
                  >
                    <option>Part Design</option>
                  </select>
                  <Icon name="workbench" className="pointer-events-none absolute top-1 left-[7px] size-5" />
                  <svg viewBox="0 0 10 6" className="pointer-events-none absolute top-[12px] right-[7px] h-[6px] w-[10px]" aria-hidden="true">
                    <path d="M0 0H10L5 6Z" />
                  </svg>
                </div>
              </ToolBar>
              <ToolBar items={macroBar} last />
            </BarRow>
            <BarRow>
              <ToolBar items={viewBar} last />
            </BarRow>
            <BarRow>
              <ToolBar items={designBar} />
              <ToolBar items={geometryBar} className="pr-[2px] pl-px" />
              <ToolBar items={constraintBar} last>
                <button type="button" aria-label="More tools" className="ml-auto pr-1">
                  <svg viewBox="0 0 12 9" className="h-[9px] w-3 fill-none stroke-black stroke-2" aria-hidden="true">
                    <path d="M1 .5 5 4.500 1 8.500M7 .5 11 4.500 7 8.500" />
                  </svg>
                </button>
              </ToolBar>
            </BarRow>
            <BarRow>
              <ToolBar items={sketcherBar} last />
            </BarRow>
            <main className="flex min-h-0 flex-1 bg-[#eeeeee]">
              <ComboView />
              <div className="flex min-w-0 flex-1 flex-col">
                <Viewport />
                <DocTabs />
              </div>
            </main>
            <div className="flex h-10 shrink-0 items-stretch bg-[#eeeeee] py-1 font-[family-name:'Open_Sans',sans-serif] text-[15px]">
              <span className="w-[168px] border-r border-[#d0d1d0]" />
              <output className="mr-[43px] ml-auto self-start leading-8">86.25 x 64.49 mm</output>
              <span className="mr-[25px] border-r border-[#d0d1d0]" />
            </div>
          </div>
        </div>
      </div>
      <TaskBar />
    </div>
  );
}
